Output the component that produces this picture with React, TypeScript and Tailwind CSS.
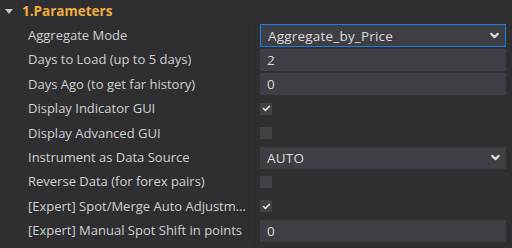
import { ChevronDown, Check } from "lucide-react";

type Row =
  | { label: string; kind: "select"; value: string; focused?: boolean }
  | { label: string; kind: "input"; value: string }
  | { label: string; kind: "check"; checked: boolean };

const rows: Row[] = [
  { label: "Aggregate Mode", kind: "select", value: "Aggregate_by_Price", focused: true },
  { label: "Days to Load (up to 5 days)", kind: "input", value: "2" },
  { label: "Days Ago (to get far history)", kind: "input", value: "0" },
  { label: "Display Indicator GUI", kind: "check", checked: true },
  { label: "Display Advanced GUI", kind: "check", checked: false },
  { label: "Instrument as Data Source", kind: "select", value: "AUTO" },
  { label: "Reverse Data (for forex pairs)", kind: "check", checked: false },
  { label: "[Expert] Spot/Merge Auto Adjustment", kind: "check", checked: true },
  { label: "[Expert] Manual Spot Shift in points", kind: "input", value: "0" },
];

function Value({ row }: { row: Row }) {
  if (row.kind === "check") {
    return (
      <div className="w-3 h-3 bg-[#414147] flex items-center justify-center">
        {row.checked && <Check size={9} strokeWidth={4} className="text-[#e8e8e8]" />}
      </div>
    );
  }
  const box =
    row.kind === "select" && row.focused
      ? "border border-[#1c7fe0] h-[23px]"
      : "h-[22px]";
  return (
    <div className={`w-full ${box} bg-[#3e3e44] flex items-center pl-[7px] pr-[4px]`}>
      <span className="flex-1 text-[13.5px] text-[#dcdcdc] tracking-[0.2px]">{row.value}</span>
      {row.kind === "select" && (
        <ChevronDown size={13} strokeWidth={4} className="text-[#d8d8d8]" />
      )}
    </div>
  );
}

export default function App() {
  return (
    <div
      className="w-[512px] h-[248px] bg-[#2f2f32] text-[13px] text-[#cfcfcf] overflow-hidden"
      style={{ fontFamily: '"Open Sans", "Liberation Sans", sans-serif' }}
    >
      {/* header */}
      <div className="h-[23.5px] flex items-center pl-[5px] pb-[1px]">
        <svg width="8" height="5" viewBox="0 0 8 5" className="mr-[9px]">
          <path d="M0 0 L8 0 L4 5 Z" fill="#c8c8c8" />
        </svg>
        <span className="font-bold text-[13.5px] text-[#f0ad3c]">1.Parameters</span>
      </div>

      {/* property grid */}
      <div className="flex">
        <div className="w-[256px] border-r border-[#28282a]">
          {rows.map((r) => (
            <div key={r.label} className="h-[24.4px] flex items-center pl-[28px] pr-[5px]">
              <span className="truncate">{r.label}</span>
            </div>
          ))}
        </div>
        <div className="flex-1 pl-[4px] pr-[6px]">
          {rows.map((r) => (
            <div key={r.label} className="h-[24.4px] flex items-center">
              <Value row={r} />
            </div>
          ))}
        </div>
      </div>
    </div>
  );
}
